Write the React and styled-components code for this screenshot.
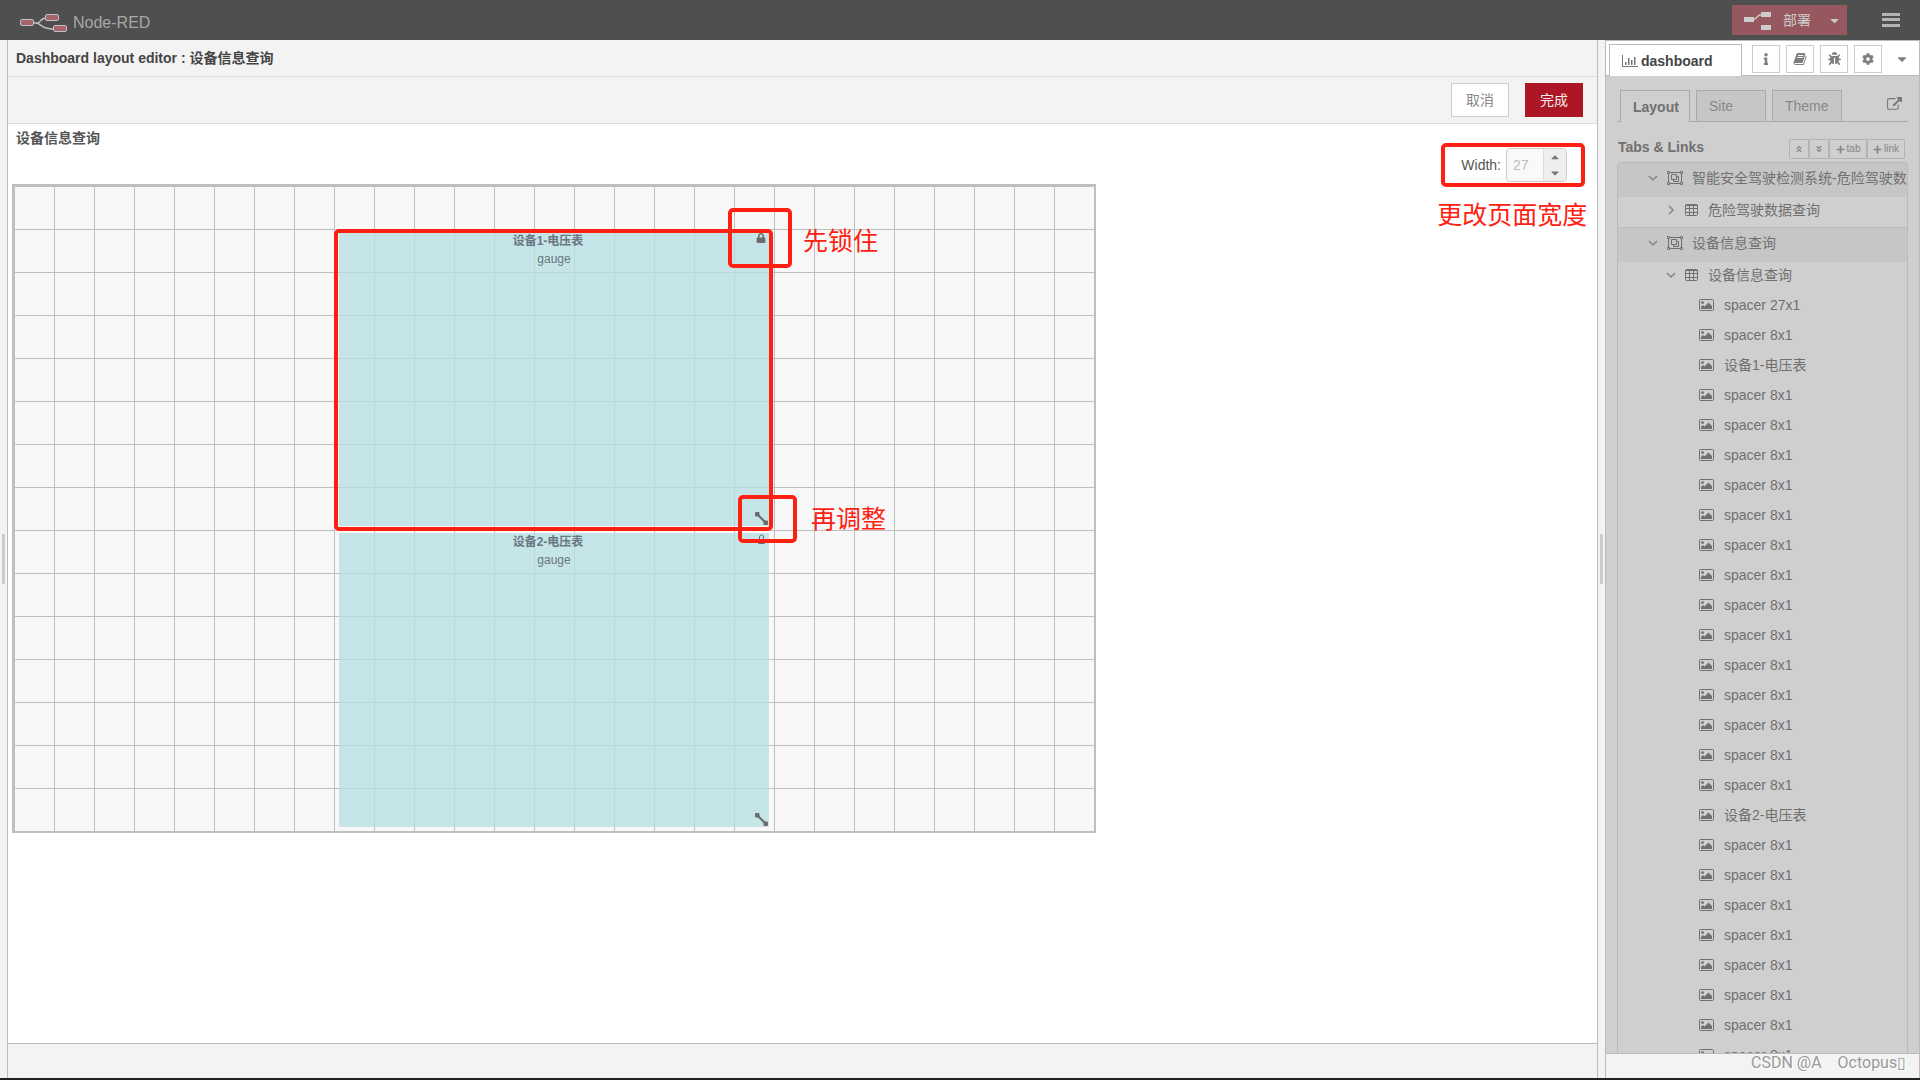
import React, { useState } from 'react';
import styled, { createGlobalStyle, ThemeProvider, css } from 'styled-components';
import { FaAngleDoubleDown, FaAngleDoubleUp, FaBug, FaCaretDown, FaCaretUp, FaCog, FaInfo, FaLock, FaPlus } from 'react-icons/fa';

const theme = {
    colors: {
        header: '#4f4f4f',
        panel: '#f3f3f3',
        shade: '#cfcfcf',
        shadeDark: '#c6c6c6',
        border: '#bbbbbb',
        lightBorder: '#dddddd',
        grid: '#bfbfbf',
        widget: 'rgba(183, 223, 227, .78)',
        text: '#555555',
        mark: '#ff2012',
        done: '#ad1625',
    },
};

const GlobalStyle = createGlobalStyle`
    * {
        box-sizing: border-box;
    }

    body {
        margin: 0;
        font: 14px/20px "Liberation Sans", "Noto Sans CJK SC", sans-serif;
        color: ${props => props.theme.colors.text};
    }

    button, input {
        font: inherit;
        color: inherit;
        margin: 0;
        padding: 0;
    }

    svg {
        display: block;
        flex: none;
    }
`;

const Page = styled.div`
    display: flex;
    flex-direction: column;
    height: 100vh;
    overflow: hidden;
    background: ${props => props.theme.colors.panel};
    border-bottom: 2px solid #222222;
`;

const Header = styled.header`
    flex: none;
    display: flex;
    align-items: center;
    justify-content: space-between;
    height: 40px;
    padding: 0 20px;
    background: ${props => props.theme.colors.header};
`;

const Brand = styled.div`
    display: flex;
    align-items: center;
    gap: 5px;
    padding-top: 5px;
    font-size: 16px;
    color: #a7a7a7;
`;

const HeaderActions = styled.div`
    display: flex;
    align-items: center;
    gap: 35px;
`;

const DeployButton = styled.button`
    display: flex;
    align-items: center;
    gap: 12px;
    height: 30px;
    padding: 0 6px 0 12px;
    border: 0;
    background: #96575e;
    color: #cccccc;

    & svg:last-child {
        margin-left: 5px;
    }
`;

const MenuButton = styled.button`
    border: 0;
    background: none;
    color: #b4b4b4;
`;

const Main = styled.main`
    flex: 1;
    min-height: 0;
    display: flex;
`;

const Gutter = styled.div`
    flex: 0 0 7px;
    display: flex;
    align-items: center;
    justify-content: center;

    &::before {
        content: '';
        width: 3px;
        height: 50px;
        background: #cccccc;
    }
`;

const Editor = styled.section`
    flex: 1;
    min-width: 0;
    display: flex;
    flex-direction: column;
    border: 1px solid ${props => props.theme.colors.border};
    border-width: 0 1px;
`;

const EditorTitle = styled.h1`
    margin: 0;
    padding: 8px;
    font-size: 14px;
    line-height: 20px;
    color: #444444;
    border-bottom: 1px solid ${props => props.theme.colors.lightBorder};
`;

const Toolbar = styled.div`
    display: flex;
    justify-content: flex-end;
    gap: 16px;
    padding: 6px 14px;
    border-bottom: 1px solid ${props => props.theme.colors.lightBorder};
`;

const ToolButton = styled.button`
    width: 58px;
    height: 34px;
    border: 1px solid #cccccc;
    background: #ffffff;
    color: #888888;

    ${props => props.$primary && css`
        border-color: ${props.theme.colors.done};
        background: ${props.theme.colors.done};
        color: #eeeeee;
    `}
`;

const Workspace = styled.div`
    flex: 1;
    min-height: 0;
    overflow: hidden;
    padding: 0 4px;
    background: #ffffff;
`;

const WorkspaceHeader = styled.div`
    display: flex;
    justify-content: space-between;
    height: 60px;
    padding: 4px 26px 0 4px;
`;

const GroupName = styled.h2`
    margin: 0;
    font-size: 14px;
    line-height: 20px;
`;

const WidthField = styled.div`
    position: relative;
    align-self: flex-end;
    display: flex;
    align-items: center;
    gap: 5px;
    padding-bottom: 2px;
`;

const Spinner = styled.span`
    display: flex;
    width: 61px;
    height: 34px;
    border: 1px solid #cccccc;
    border-radius: 4px;
    overflow: hidden;
    background: #f9f9f9;
`;

const SpinnerInput = styled.input`
    flex: 1;
    min-width: 0;
    padding-left: 6px;
    border: 0;
    background: none;
    color: #bbbbbb;
`;

const SpinnerButtons = styled.span`
    display: flex;
    flex-direction: column;
    width: 23px;
    border-left: 1px solid #dddddd;
    background: #eeeeee;
`;

const SpinnerButton = styled.button`
    flex: 1;
    display: flex;
    align-items: center;
    justify-content: center;
    border: 0;
    background: none;
    color: #777777;
`;

const LayoutGrid = styled.div`
    position: relative;
    display: grid;
    grid-template-columns: repeat(27, 40px);
    grid-template-rows: repeat(15, 43px);
    width: max-content;
    border: 1px solid ${props => props.theme.colors.grid};
    border-width: 3px 1px 1px 3px;
    background-color: #f8f8f8;
    background-image:
        linear-gradient(to left, ${props => props.theme.colors.grid} 1px, transparent 1px),
        linear-gradient(to top, ${props => props.theme.colors.grid} 1px, transparent 1px);
    background-size: 40px 43px;
`;

const Widget = styled.article`
    position: relative;
    grid-column: 9 / span 11;
    grid-row: ${props => props.$row} / span 7;
    margin: 2px 6px 5px 4px;
    text-align: center;
    font-size: 12px;
    line-height: 18px;
    color: #687780;
    background: ${props => props.theme.colors.widget};
`;

const WidgetName = styled.div`
    padding-right: 12px;
    font-weight: bold;
`;

const WidgetButton = styled.button`
    position: absolute;
    right: ${props => (props.$corner === 'bottom' ? 1 : 3)}px;
    ${props => props.$corner}: 1px;
    border: 0;
    background: none;
    color: #6b6b6b;
`;

const MarkBox = styled.div`
    position: absolute;
    left: ${props => props.$x}px;
    top: ${props => props.$y}px;
    width: ${props => props.$w}px;
    height: ${props => props.$h}px;
    border: 4px solid ${props => props.theme.colors.mark};
    border-radius: 5px;
    pointer-events: none;
`;

const MarkText = styled.div`
    position: absolute;
    left: ${props => props.$x}px;
    top: ${props => props.$y}px;
    font-size: 25px;
    line-height: 30px;
    white-space: nowrap;
    color: ${props => props.theme.colors.mark};
`;

const EditorFooter = styled.footer`
    flex: 0 0 35px;
    border-top: 1px solid ${props => props.theme.colors.border};
`;

const Sidebar = styled.aside`
    flex: 0 0 315px;
    min-width: 0;
    display: flex;
    flex-direction: column;
    border: 1px solid ${props => props.theme.colors.border};
    border-bottom: 0;
    background: ${props => props.theme.colors.shade};
    color: #707070;
`;

const SidebarTabs = styled.div`
    flex: none;
    display: flex;
    align-items: center;
    gap: 6px;
    height: 35px;
    padding-left: 3px;
    background: #ffffff;
    box-shadow: inset 0 -1px ${props => props.theme.colors.border};
`;

const SidebarTab = styled.button`
    flex: none;
    align-self: flex-end;
    display: flex;
    align-items: center;
    gap: 3px;
    width: 133px;
    height: 32px;
    margin-right: 4px;
    padding-left: 12px;
    border: 1px solid ${props => props.theme.colors.border};
    border-bottom: 0;
    background: #ffffff;
    font-weight: bold;
    color: #444444;
`;

const IconButton = styled.button`
    flex: none;
    display: flex;
    align-items: center;
    justify-content: center;
    width: 28px;
    height: 28px;
    border: 1px solid #cccccc;
    background: #ffffff;
    color: #7f7f7f;

    ${props => props.$bare && css`
        border: 0;
        background: none;
    `}
`;

const SidebarBody = styled.div`
    flex: 1;
    min-height: 0;
    display: flex;
    flex-direction: column;
    padding: 14px 11px 0;
    overflow: hidden;
`;

const PanelTabs = styled.div`
    flex: none;
    display: flex;
    gap: 6px;
    height: 32px;
    padding-left: 3px;
    box-shadow: inset 0 -1px #aaaaaa;
`;

const PanelTab = styled.button`
    width: 70px;
    padding-left: 12px;
    text-align: left;
    border: 1px solid #aaaaaa;
    background: ${props => props.theme.colors.shadeDark};
    color: #888888;

    ${props => props.$active && css`
        border-bottom: 0;
        background: ${props.theme.colors.shade};
        font-weight: bold;
        color: #707070;
    `}
`;

const OpenLink = styled.a`
    margin: 7px 6px 0 auto;
    color: #777777;
`;

const ListHeader = styled.div`
    flex: none;
    display: flex;
    align-items: flex-end;
    height: 40px;
    padding: 0 3px 3px 1px;
`;

const ListTitle = styled.h3`
    margin: 0 auto 0 0;
    padding-bottom: 2px;
    font-size: 14px;
`;

const SmallButton = styled.button`
    display: flex;
    align-items: center;
    justify-content: center;
    gap: 2px;
    width: ${props => (props.$wide ? 38 : 20)}px;
    height: 20px;
    border: 1px solid #b4b4b4;
    border-radius: 1px;
    background: none;
    font-size: 10px;
    color: #858585;
`;

const Tree = styled.ul`
    flex: 1;
    min-height: 0;
    overflow: hidden;
    margin: 0;
    padding: 0;
    list-style: none;
    border: 1px solid ${props => props.theme.colors.border};
    border-bottom: 0;
    border-radius: 4px 4px 0 0;
`;

const levels = {
    tab: css`
        height: 34px;
        padding: 0 0 4px 30px;
        background: ${props => props.theme.colors.shadeDark};
    `,
    group: css`
        height: 28px;
        padding: 0 0 2px 48px;
    `,
    item: css`
        height: 30px;
        padding: 0 0 0 81px;
    `,
};

const TreeRow = styled.li`
    display: flex;
    align-items: center;
    gap: 9px;
    white-space: nowrap;
    overflow: hidden;
    ${props => levels[props.$level]}
    ${props => props.$last && css`
        height: 31px;
        padding-bottom: 4px;
        border-bottom: 1px solid ${props.theme.colors.border};
    `}
`;

const TreeIcon = styled.span`
    flex: none;
    width: 16px;
`;

const TreeGroupIcon = styled(TreeIcon)`
    width: 14px;
`;

const SidebarFooter = styled.footer`
    flex: 0 0 25px;
    padding-right: 13px;
    border-top: 1px solid ${props => props.theme.colors.border};
    background: ${props => props.theme.colors.panel};
    font: 16px/18px Roboto, "DejaVu Sans", sans-serif;
    text-align: right;
    white-space: pre;
    color: #999999;
    text-shadow: 1px 1px #ffffff;
`;

const Logo = () => (
    <svg width="48" height="20" viewBox="0 0 48 20" fill="#a5666b" stroke="#c0c0c0">
        <path d="M14 10h3c4 0 3-5 9-5M16 10c5 0 5 6 17 6" fill="none" strokeWidth="1.5" />
        <rect x=".5" y="6.500" width="13" height="6" rx="1.500" />
        <rect x="25.500" y="1.500" width="13" height="6" rx="1.500" />
        <rect x="33.500" y="12.500" width="13" height="6" rx="1.500" />
    </svg>
);

const DeployIcon = () => (
    <svg width="27" height="19" viewBox="0 0 27 19" fill="currentColor">
        <path d="M0 6h10v5H0zM17 1h10v5H17zM17 14h10v5H17z" />
        <path d="M9 8.500c5 0 3-5 9-5" fill="none" stroke="currentColor" strokeWidth="1.500" />
    </svg>
);

const MenuIcon = () => (
    <svg width="18" height="16" viewBox="0 0 18 16" fill="currentColor">
        <path d="M0 1h18v3H0zM0 6h18v3H0zM0 12h18v3H0z" />
    </svg>
);

const ChartIcon = () => (
    <svg width="16" height="14" viewBox="0 0 16 14" fill="#777777">
        <path d="M0 1h1v11h15v1H0zM3 8h1.500v3H3zM6 4h1.500v7H6zM9 6h1.500v5H9zM12 3h1.500v8H12z" />
    </svg>
);

const BookIcon = () => (
    <svg width="14" height="14" viewBox="0 0 1792 1792" fill="currentColor">
        <path d="M1703 478q40 57 18 129l-275 906q-19 64-76.500 107.500t-122.500 43.500h-923q-77 0-148.500-53.500t-99.500-131.500q-24-67-2-127 0-4 3-27t4-37q1-8-3-21.500t-3-19.500q2-11 8-21t16.500-23.500 16.500-23.500q23-38 45-91.500t30-91.500q3-10 .5-30t-.5-28q3-11 17-28t17-23q21-36 42-92t25-90q1-9-2.500-32t.5-28q4-13 22-30.500t22-22.500q19-26 42.500-84.500t27.500-96.500q1-8-3-25.500t-2-26.500q2-8 9-18t18-23 17-21q8-12 16.500-30.500t15-35 16-36 19.500-32 26.500-23.500 36-11.500 47.500 5.500l-1 3q38-9 51-9h761q74 0 114 56t18 130l-274 906q-36 119-71.500 153.500t-128.500 34.500h-869q-27 0-38 15-11 16-1 43 24 70 144 70h923q29 0 56-15.500t35-41.500l300-987q7-22 5-57 38 15 59 43zm-1064 2q-4 13 2 22.500t20 9.500h608q13 0 25.500-9.500t16.500-22.500l21-64q4-13-2-22.500t-20-9.500h-608q-13 0-25.500 9.500t-16.500 22.500zm-83 256q-4 13 2 22.500t20 9.500h608q13 0 25.500-9.500t16.500-22.500l21-64q4-13-2-22.500t-20-9.500h-608q-13 0-25.500 9.500t-16.500 22.500z" />
    </svg>
);

const ExternalIcon = () => (
    <svg width="15" height="15" viewBox="0 0 1792 1792" fill="currentColor">
        <path d="M1408 928v320q0 119-84.500 203.500t-203.500 84.500h-832q-119 0-203.500-84.500t-84.500-203.500v-832q0-119 84.500-203.500t203.500-84.500h704q14 0 23 9t9 23v64q0 14-9 23t-23 9h-704q-66 0-113 47t-47 113v832q0 66 47 113t113 47h832q66 0 113-47t47-113v-320q0-14 9-23t23-9h64q14 0 23 9t9 23zm384-864v512q0 26-19 45t-45 19-45-19l-176-176-652 652q-10 10-23 10t-23-10l-114-114q-10-10-10-23t10-23l652-652-176-176q-19-19-19-45t19-45 45-19h512q26 0 45 19t19 45z" />
    </svg>
);

const ChevronIcon = ({ open }) => (
    <svg width="10" height="10" viewBox="0 0 10 10" fill="none" stroke="#858585" strokeWidth="1.500">
        <path d={open ? 'M1 3l4 4 4-4' : 'M3 1l4 4-4 4'} />
    </svg>
);

const ObjectGroupIcon = () => (
    <svg width="16" height="14" viewBox="0 0 16 14" fill="none" stroke="currentColor">
        <path d="M1.500 1.500h13v11h-13z" />
        <path d="M4.500 3.500h5v5h-5zM9.500 5.500h2v5h-5v-2" />
        <path d="M.5.5h2v2h-2zM13.500.5h2v2h-2zM.5 11.500h2v2h-2zM13.500 11.500h2v2h-2z" fill="#cfcfcf" />
    </svg>
);

const TableIcon = () => (
    <svg width="13" height="12" viewBox="0 0 13 12" fill="none" stroke="currentColor">
        <rect x=".5" y=".5" width="12" height="11" rx="1" />
        <path d="M0 1.500h13M0 4.500h13M0 8.500h13M4.500 1v11M8.500 1v11" />
    </svg>
);

const PictureIcon = () => (
    <svg width="15" height="12" viewBox="0 0 15 12" fill="currentColor">
        <rect x=".5" y=".5" width="14" height="11" rx="1" fill="none" stroke="currentColor" />
        <circle cx="3.600" cy="3.600" r="1.400" />
        <path d="M2 10V8l2-2 1.500 1.500L9.500 3.500 13 7v3z" />
    </svg>
);

const OpenLockIcon = () => (
    <svg width="9" height="10" viewBox="0 0 9 10" fill="none" stroke="currentColor">
        <path d="M2.500 5V3a2 2 0 0 1 4 0v2M1.500 5.500h6v4h-6z" />
    </svg>
);

const ResizeIcon = () => (
    <svg width="13" height="13" viewBox="0 0 13 13" fill="currentColor">
        <path d="M2 2l9 9" stroke="currentColor" strokeWidth="2" />
        <rect x="0" y="0" width="4.500" height="4.500" rx="1" />
        <rect x="8.500" y="8.500" width="4.500" height="4.500" rx="1" />
    </svg>
);

const widgets = [
    { name: '设备1-电压表', type: 'gauge', row: 2, locked: true },
    { name: '设备2-电压表', type: 'gauge', row: 9, locked: false },
];

const items = [
    'spacer 27x1',
    'spacer 8x1',
    widgets[0].name,
    ...Array(14).fill('spacer 8x1'),
    widgets[1].name,
    ...Array(8).fill('spacer 8x1'),
];

function LayoutEditor() {
    const [width, setWidth] = useState(27);

    return (
        <Editor>
            <EditorTitle>Dashboard layout editor : 设备信息查询</EditorTitle>
            <Toolbar>
                <ToolButton>取消</ToolButton>
                <ToolButton $primary>完成</ToolButton>
            </Toolbar>
            <Workspace>
                <WorkspaceHeader>
                    <GroupName>设备信息查询</GroupName>
                    <WidthField>
                        <label htmlFor="layout-width">Width:</label>
                        <Spinner>
                            <SpinnerInput id="layout-width" value={width} onChange={e => setWidth(e.target.value)} />
                            <SpinnerButtons>
                                <SpinnerButton aria-label="Increase" onClick={() => setWidth(Number(width) + 1)}><FaCaretUp size={12} /></SpinnerButton>
                                <SpinnerButton aria-label="Decrease" onClick={() => setWidth(Number(width) - 1)}><FaCaretDown size={12} /></SpinnerButton>
                            </SpinnerButtons>
                        </Spinner>
                        <MarkBox $x={-20} $y={-5} $w={144} $h={44} />
                        <MarkText $x={-24} $y={52}>更改页面宽度</MarkText>
                    </WidthField>
                </WorkspaceHeader>
                <LayoutGrid>
                    {widgets.map(widget => (
                        <Widget key={widget.name} $row={widget.row}>
                            <WidgetName>{widget.name}</WidgetName>
                            <div>{widget.type}</div>
                            <WidgetButton $corner="top" aria-label="Lock">
                                {widget.locked ? <FaLock size={10} /> : <OpenLockIcon />}
                            </WidgetButton>
                            <WidgetButton $corner="bottom" aria-label="Resize"><ResizeIcon /></WidgetButton>
                        </Widget>
                    ))}
                    <MarkBox $x={319} $y={42} $w={439} $h={302} />
                    <MarkBox $x={713} $y={21} $w={64} $h={60} />
                    <MarkText $x={788} $y={39}>先锁住</MarkText>
                    <MarkBox $x={723} $y={308} $w={59} $h={48} />
                    <MarkText $x={796} $y={317}>再调整</MarkText>
                </LayoutGrid>
            </Workspace>
            <EditorFooter />
        </Editor>
    );
}

function DashboardSidebar() {
    return (
        <Sidebar>
            <SidebarTabs>
                <SidebarTab><ChartIcon />dashboard</SidebarTab>
                <IconButton aria-label="Info"><FaInfo size={12} /></IconButton>
                <IconButton aria-label="Help"><BookIcon /></IconButton>
                <IconButton aria-label="Debug"><FaBug size={13} /></IconButton>
                <IconButton aria-label="Settings"><FaCog size={12} /></IconButton>
                <IconButton $bare aria-label="More"><FaCaretDown size={14} /></IconButton>
            </SidebarTabs>
            <SidebarBody>
                <PanelTabs>
                    <PanelTab $active>Layout</PanelTab>
                    <PanelTab>Site</PanelTab>
                    <PanelTab>Theme</PanelTab>
                    <OpenLink href="#dashboard" aria-label="Open dashboard"><ExternalIcon /></OpenLink>
                </PanelTabs>
                <ListHeader>
                    <ListTitle>Tabs &amp; Links</ListTitle>
                    <SmallButton aria-label="Collapse all"><FaAngleDoubleUp size={8} /></SmallButton>
                    <SmallButton aria-label="Expand all"><FaAngleDoubleDown size={8} /></SmallButton>
                    <SmallButton $wide><FaPlus size={9} />tab</SmallButton>
                    <SmallButton $wide><FaPlus size={9} />link</SmallButton>
                </ListHeader>
                <Tree>
                    <TreeRow $level="tab">
                        <ChevronIcon open />
                        <TreeIcon><ObjectGroupIcon /></TreeIcon>
                        智能安全驾驶检测系统-危险驾驶数据
                    </TreeRow>
                    <TreeRow $level="group" $last>
                        <ChevronIcon />
                        <TreeGroupIcon><TableIcon /></TreeGroupIcon>
                        危险驾驶数据查询
                    </TreeRow>
                    <TreeRow $level="tab">
                        <ChevronIcon open />
                        <TreeIcon><ObjectGroupIcon /></TreeIcon>
                        设备信息查询
                    </TreeRow>
                    <TreeRow $level="group">
                        <ChevronIcon open />
                        <TreeGroupIcon><TableIcon /></TreeGroupIcon>
                        设备信息查询
                    </TreeRow>
                    {items.map((item, key) => (
                        <TreeRow key={key} $level="item">
                            <TreeIcon><PictureIcon /></TreeIcon>
                            {item}
                        </TreeRow>
                    ))}
                </Tree>
            </SidebarBody>
            <SidebarFooter>{'CSDN @A    Octopus▯'}</SidebarFooter>
        </Sidebar>
    );
}

function App() {
    return (
        <ThemeProvider theme={theme}>
            <GlobalStyle />
            <Page>
                <Header>
                    <Brand><Logo />Node-RED</Brand>
                    <HeaderActions>
                        <DeployButton><DeployIcon />部署<FaCaretDown size={13} /></DeployButton>
                        <MenuButton aria-label="Menu"><MenuIcon /></MenuButton>
                    </HeaderActions>
                </Header>
                <Main>
                    <Gutter />
                    <LayoutEditor />
                    <Gutter />
                    <DashboardSidebar />
                </Main>
            </Page>
        </ThemeProvider>
    );
}

export default App;
